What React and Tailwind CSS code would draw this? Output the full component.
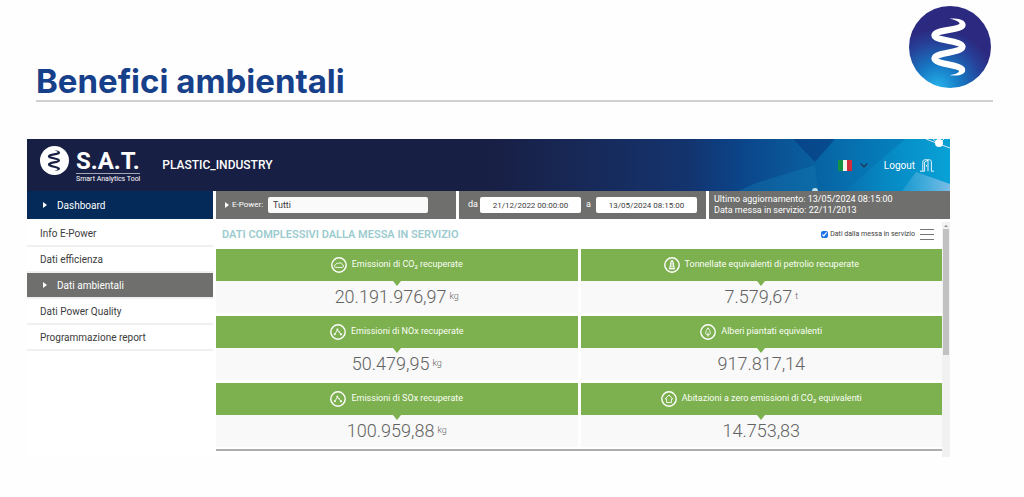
import React, { useState } from 'react';

const menuItems = ['Info E-Power', 'Dati efficienza', 'Dati ambientali', 'Dati Power Quality', 'Programmazione report'];

const metrics = [
  { label: 'Emissioni di CO₂ recuperate', value: '20.191.976,97', unit: 'kg', icon: 'cloud' },
  { label: 'Tonnellate equivalenti di petrolio recuperate', value: '7.579,67', unit: 't', icon: 'oil' },
  { label: 'Emissioni di NOx recuperate', value: '50.479,95', unit: 'kg', icon: 'molecule' },
  { label: 'Alberi piantati equivalenti', value: '917.817,14', unit: '', icon: 'tree' },
  { label: 'Emissioni di SOx recuperate', value: '100.959,88', unit: 'kg', icon: 'molecule' },
  { label: 'Abitazioni a zero emissioni di CO₂ equivalenti', value: '14.753,83', unit: '', icon: 'house' },
];

// Spring shape shared by both logos
const Spring = ({ color }) => (
  <g>
    <path
      d="M214 78C200 91 138 88 133 105C134 122 214 120 216 139C215 158 136 155 133 174C136 192 204 192 214 206"
      fill="none"
      stroke={color}
      strokeWidth="19"
      strokeLinecap="round"
      strokeLinejoin="round"
    />
    <path d="M178 56C205 52 230 61 225 79L207 76C211 67 200 60 178 56Z" fill={color} />
    <path d="M178 224C206 228 230 220 223 203L205 208C210 216 198 221 178 224Z" fill={color} />
  </g>
);

const CompanyLogo = () => (
  <svg className="w-[82px] h-[82px] shrink-0" viewBox="57 18 244 244" role="img" aria-label="Logo">
    <defs>
      <radialGradient id="logoFill" cx="0.35" cy="1" r="0.8">
        <stop offset="0" stopColor="#27b4ec" />
        <stop offset="0.35" stopColor="#1679c4" />
        <stop offset="0.7" stopColor="#274098" />
        <stop offset="0.9" stopColor="#2b2a80" />
      </radialGradient>
    </defs>
    <circle cx="179" cy="140" r="122" fill="url(#logoFill)" />
    <Spring color="#ffffff" />
  </svg>
);

const SatLogo = () => (
  <div className="flex gap-[7px] text-white">
    <svg className="w-[29px] h-[29px]" viewBox="57 18 244 244" aria-hidden="true">
      <circle cx="179" cy="140" r="122" fill="#ffffff" />
      <Spring color="#181f44" />
    </svg>
    <div className="pt-[5px]">
      <p className="text-[24px] leading-[20px] font-bold border-b border-white/60 pb-[2px]">S.A.T.</p>
      <p className="text-[7px] leading-[11px]">Smart Analytics Tool</p>
    </div>
  </div>
);

// Low-poly artwork on the right of the header
const HeaderArt = () => (
  <svg className="absolute right-0 top-0 h-full w-[260px]" viewBox="0 0 260 52" aria-hidden="true">
    <defs>
      <linearGradient id="artFill" x1="0" y1="0" x2="1" y2="0">
        <stop offset="0" stopColor="#13346f" />
        <stop offset="0.2" stopColor="#0b458a" />
        <stop offset="0.48" stopColor="#09609f" />
        <stop offset="0.75" stopColor="#0688c3" />
        <stop offset="1" stopColor="#08a2d6" />
      </linearGradient>
      <linearGradient id="paleFacet" x1="0" y1="0" x2="1" y2="0">
        <stop offset="0" stopColor="#4fb0de" stopOpacity="0.3" />
        <stop offset="1" stopColor="#7cbce6" />
      </linearGradient>
    </defs>
    <rect width="260" height="52" fill="url(#artFill)" />
    <path d="M103 0H145L125 23Z" fill="#07397f" opacity="0.6" />
    <path d="M125 26L128 52H48L66 44Z" fill="#1581b8" opacity="0.35" />
    <path d="M145 0L125 23L128 52H155L215 0Z" fill="#0566a8" opacity="0.35" />
    <path d="M226 33L260 45V52H212Z" fill="url(#paleFacet)" />
    <path d="M236 0L249 5L260 9M249 5L254 0M249 5L243 0" fill="none" stroke="#d7ecf8" strokeWidth="1" />
    <circle cx="249" cy="4" r="4" fill="#ffffff" />
    <path d="M122 52a3 3 0 0 1 6 0Z" fill="#bfe0f3" />
  </svg>
);

const MetricIcon = ({ name }) => (
  <svg className="w-4 h-4" viewBox="0 0 16 16" fill="none" stroke="white" strokeLinejoin="round" aria-hidden="true">
    <circle cx="8" cy="8" r="7.2" strokeWidth="1.4" />
    {name === 'cloud' && (
      <path d="M4.6 10.4C2.9 10.2 3 8 4.6 7.9C4.8 6.3 6.6 5.7 7.8 6.4C9.2 5.4 11.2 6 11.4 7.7C13.2 8 12.9 10.2 11.4 10.4Z" strokeWidth="0.9" />
    )}
    {name === 'oil' && (
      <g>
        <path d="M7 4.2H9L10.3 11.6H5.7Z" strokeWidth="1" />
        <path d="M6.8 6.2H9.2M6.5 8H9.5M6.2 9.8H9.8M4.9 11.8H11.1M7 3.6H9" strokeWidth="0.9" />
      </g>
    )}
    {name === 'molecule' && (
      <g>
        <path d="M5 10L7.3 6L9 7.6L10.9 10.2" strokeWidth="0.9" />
        <circle cx="7.4" cy="5.6" r="1" fill="white" stroke="none" />
        <circle cx="4.8" cy="10.2" r="1" fill="white" stroke="none" />
        <circle cx="11" cy="10.3" r="1.1" fill="white" stroke="none" />
        <circle cx="9" cy="7.8" r="0.7" fill="white" stroke="none" />
      </g>
    )}
    {name === 'tree' && (
      <path d="M8 3.8C6.7 5.7 5.7 7.3 5.7 8.8C5.7 10.2 6.6 10.9 8 10.9C9.4 10.9 10.3 10.2 10.3 8.8C10.3 7.3 9.3 5.7 8 3.8ZM8 8.5V12.6" strokeWidth="0.9" />
    )}
    {name === 'house' && (
      <path d="M8 4L4.2 7.9H5.6V11.6H10.4V7.9H11.8Z" strokeWidth="0.9" />
    )}
  </svg>
);

const Arrow = ({ className }) => (
  <svg className={className} viewBox="0 0 4 6" fill="white" aria-hidden="true">
    <path d="M0 0L4 3L0 6Z" />
  </svg>
);

const MetricCard = ({ metric }) => (
  <div className="bg-[#f9f9f9]">
    <div className="relative h-8 flex items-center justify-center gap-[5px] bg-[#7db04f] text-[#fbfff6] text-[9px]">
      <MetricIcon name={metric.icon} />
      <span>{metric.label}</span>
      <svg className="absolute left-1/2 top-full -translate-x-1/2 w-[8px] h-[5px]" viewBox="0 0 8 5" fill="#7db04f" aria-hidden="true">
        <path d="M0 0H8L4 5Z" />
      </svg>
    </div>
    <p className="h-8 pb-[2px] flex items-center justify-center gap-[3px] text-[#626362]">
      <span className="text-[18px] font-light">{metric.value}</span>
      {metric.unit && <span className="pt-[2px] text-[9px] font-light">{metric.unit}</span>}
    </p>
  </div>
);

const Sidebar = ({ active, onSelect }) => (
  <nav className="w-[186px] shrink-0 text-[10px] text-[#3c3c3c]">
    <a href="#dashboard" className="h-7 mb-[2px] flex items-center gap-[10px] pl-4 bg-[#042a5a] text-white">
      <Arrow className="w-1 h-[6px]" />
      Dashboard
    </a>
    {menuItems.map((item) => (
      <button
        key={item}
        onClick={() => onSelect(item)}
        className={
          item === active
            ? 'w-full h-[26px] flex items-center gap-[10px] pl-4 bg-[#6f706e] text-white border-b-2 border-[#f0f0f0]'
            : 'w-full h-[26px] flex items-center pl-[13px] border-b-2 border-[#f0f0f0]'
        }
      >
        {item === active && <Arrow className="w-1 h-[6px]" />}
        {item}
      </button>
    ))}
  </nav>
);

const FilterBar = () => (
  <div className="flex gap-[3px] h-7 text-[9px] text-white">
    <div className="flex-[231] flex items-center bg-[#6f706e] pl-[9px]">
      <Arrow className="w-1 h-[6px]" />
      <label htmlFor="epower" className="w-[39px] pl-[3px] text-[8px] whitespace-nowrap">E-Power:</label>
      <input id="epower" defaultValue="Tutti" className="w-40 h-4 px-[5px] rounded-xs bg-[#fafafa] text-[#3c3c3c]" />
    </div>
    <div className="flex-[238] flex items-center bg-[#6f706e] pl-[9px]">
      <label htmlFor="from" className="w-[12px]">da</label>
      <input id="from" defaultValue="21/12/2022 00:00:00" className="w-[101px] h-4 rounded-xs bg-white text-center text-[8px] text-[#3c3c3c]" />
      <label htmlFor="to" className="w-[15px] text-center">a</label>
      <input id="to" defaultValue="13/05/2024 08:15:00" className="w-[101px] h-4 rounded-xs bg-white text-center text-[8px] text-[#3c3c3c]" />
    </div>
    <div className="flex-[236] flex flex-col justify-center bg-[#6f706e] pl-[5px] leading-[11px]">
      <p>Ultimo aggiornamento: 13/05/2024 08:15:00</p>
      <p>Data messa in servizio: 22/11/2013</p>
    </div>
  </div>
);

const Header = () => (
  <header className="relative h-[52px] flex justify-between bg-linear-to-r from-[#181f44] from-50% to-[#13346f] to-72% text-white">
    <HeaderArt />
    <div className="relative flex pl-[13px] pt-[7px]">
      <SatLogo />
      <h2 className="pl-[22px] pt-[9px] text-[12px] leading-[20px] font-medium">PLASTIC_INDUSTRY</h2>
    </div>
    <div className="relative flex items-center pr-4">
      <button aria-label="Lingua" className="flex items-center gap-2">
        <svg className="w-[14px] h-[11px]" viewBox="0 0 14 11" aria-hidden="true">
          <rect width="14" height="11" fill="#f4f5f0" />
          <rect width="5" height="11" fill="#129247" />
          <rect x="9" width="5" height="11" fill="#d12d3a" />
        </svg>
        <svg className="w-2 h-[5px]" viewBox="0 0 8 5" fill="none" stroke="#20304c" strokeWidth="1.2" aria-hidden="true">
          <path d="M0.7 0.7L4 4L7.3 0.7" />
        </svg>
      </button>
      <a href="#logout" className="ml-4 flex items-center gap-[5px] text-[10px]">
        Logout
        <svg className="w-[14px] h-[13px]" viewBox="0 0 14 13" fill="none" stroke="white" strokeWidth="0.9" aria-hidden="true">
          <path d="M0 12.2H4.6V3L8 1.2V12.2M2.8 12V2.8C2.8 1.6 3.6 .8 4.8 .8H9.4C10.6 .8 11.4 1.6 11.4 2.8V12.2H14M6.6 6V7.6" />
        </svg>
      </a>
    </div>
  </header>
);

const App = () => {
  const [active, setActive] = useState('Dati ambientali');
  const [sinceStart, setSinceStart] = useState(true);

  return (
    <main className="min-h-screen bg-[#fefefe] pt-[6px] font-['Roboto',sans-serif]">
      {/* Slide title */}
      <div className="ml-9 mr-[31px] h-[96px] flex justify-between border-b-2 border-[#d0d0d0]">
        <h1 className="self-end text-[33px] leading-[38px] font-bold text-[#17408a] font-['Inter',sans-serif]">
          Benefici ambientali
        </h1>
        <div className="pr-[2px]">
          <CompanyLogo />
        </div>
      </div>

      {/* Application window */}
      <section className="mt-[37px] ml-[27px] mr-[74px] bg-white">
        <Header />
        <div className="flex gap-[3px]">
          <Sidebar active={active} onSelect={setActive} />
          <div className="flex-1 min-w-0">
            <FilterBar />
            <div className="flex">
              <div className="flex-1 pb-[6px]">
                <div className="h-[30px] flex items-center justify-between pl-[6px] pr-2">
                  <h3 className="pt-[2px] text-[11px] font-semibold text-[#9ccbcf]">DATI COMPLESSIVI DALLA MESSA IN SERVIZIO</h3>
                  <div className="flex items-center gap-[5px]">
                    <label className="flex items-center gap-[2px] text-[7px] text-[#3c3c3c]">
                      <input
                        type="checkbox"
                        checked={sinceStart}
                        onChange={(e) => setSinceStart(e.target.checked)}
                        className="w-[7px] h-[7px] accent-[#1a73e8]"
                      />
                      Dati dalla messa in servizio
                    </label>
                    <button aria-label="Menu" className="w-[14px] h-[11px] flex flex-col justify-between">
                      <span className="w-full h-px bg-[#777]" />
                      <span className="w-full h-px bg-[#777]" />
                      <span className="w-full h-px bg-[#777]" />
                    </button>
                  </div>
                </div>
                <div className="grid grid-cols-2 gap-[3px] pb-[2px] border-b-2 border-[#adadad]">
                  {metrics.map((metric) => (
                    <MetricCard key={metric.label} metric={metric} />
                  ))}
                </div>
              </div>
              {/* Scrollbar */}
              <div className="mt-[3px] w-2 flex flex-col items-center bg-[#f1f1f1]">
                <svg className="w-[4px] h-[7px]" viewBox="0 0 4 7" fill="#8a8a8a" aria-hidden="true">
                  <path d="M0 5L2 3L4 5Z" />
                </svg>
                <div className="w-[6px] h-[126px] bg-[#c1c1c1]" />
              </div>
            </div>
          </div>
        </div>
      </section>
    </main>
  );
};

export default App;
